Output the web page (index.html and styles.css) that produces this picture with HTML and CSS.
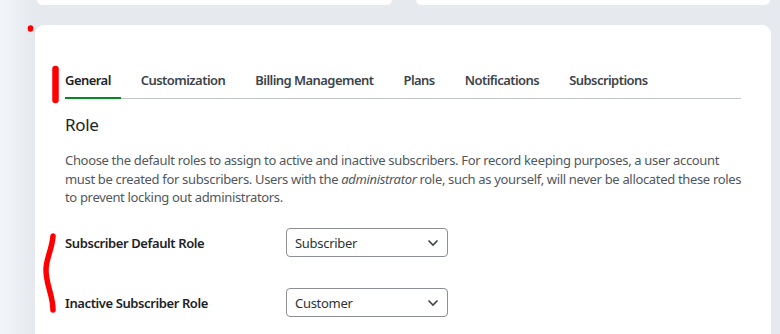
FILE: index.html
```html
<!DOCTYPE html>
<html lang="en">
<head>
    <meta charset="UTF-8">
    <meta name="viewport" content="width=device-width, initial-scale=1.0">
    <title>Settings - General</title>
    <link rel="stylesheet" href="styles.css">
</head>
<body>
    <div class="page">
        <div class="top-cards">
            <div class="top-card"></div>
            <div class="top-card"></div>
        </div>

        <div class="card">
            <div class="tabs">
                <div class="tab active">General</div>
                <div class="tab">Customization</div>
                <div class="tab">Billing Management</div>
                <div class="tab">Plans</div>
                <div class="tab">Notifications</div>
                <div class="tab">Subscriptions</div>
            </div>

            <h2 class="section-title">Role</h2>
            <p class="section-desc">Choose the default roles to assign to active and inactive subscribers. For record keeping purposes, a user account must be created for subscribers. Users with the <em>administrator</em> role, such as yourself, will never be allocated these roles to prevent locking out administrators.</p>

            <div class="field-row">
                <label class="field-label">Subscriber Default Role</label>
                <div class="select">
                    <span>Subscriber</span>
                    <svg class="chevron" width="12" height="8" viewBox="0 0 12 8"><path d="M1.5 1.5 6 6l4.5-4.5" fill="none" stroke="#3c434a" stroke-width="1.6"/></svg>
                </div>
            </div>

            <div class="field-row">
                <label class="field-label">Inactive Subscriber Role</label>
                <div class="select">
                    <span>Customer</span>
                    <svg class="chevron" width="12" height="8" viewBox="0 0 12 8"><path d="M1.5 1.5 6 6l4.5-4.5" fill="none" stroke="#3c434a" stroke-width="1.6"/></svg>
                </div>
            </div>
        </div>
    </div>

    <!-- hand-drawn markup on top of the screenshot -->
    <svg class="marks" width="780" height="334" viewBox="0 0 780 334">
        <ellipse cx="30.5" cy="28.5" rx="2.8" ry="3.3" fill="#ff0000"/>
        <path d="M55.5 69 L55.5 100" stroke="#ff0000" stroke-width="6.5" stroke-linecap="round" fill="none"/>
        <path d="M53 236 C52 250 46 258 46 270 C46 285 53 295 53 310" stroke="#ff0000" stroke-width="5.5" stroke-linecap="round" fill="none"/>
    </svg>
</body>
</html>
```

FILE: styles.css
```css
body {
    margin: 0;
    font-family: "Segoe UI", "Noto Sans", "Open Sans", sans-serif;
    font-size: 13px;
    letter-spacing: -0.3px;
    color: #3c434a;
    background: linear-gradient(to right, #f2f6fa 0, #e6eaef 32px);
    height: 334px;
    overflow: hidden;
}

.page {
    padding: 0 9px 0 35px;
}

.top-cards {
    display: flex;
    gap: 24px;
    padding: 0 1px 0 2px;
}

.top-card {
    flex: 1;
    height: 5px;
    background: #ffffff;
    border-radius: 0 0 9px 9px;
}

.card {
    margin-top: 20px;
    background: #ffffff;
    border-radius: 9px 9px 0 0;
    padding: 46px 30px 40px 30px;
}

.tabs {
    display: flex;
    gap: 20px;
    border-bottom: 1px solid #c3c4c7;
}

.tab {
    font-weight: 600;
    letter-spacing: -0.55px;
    color: #3c434a;
    padding: 0 10px 8px 0;
    line-height: 18px;
    margin-bottom: -1px;
    border-bottom: 2px solid transparent;
}

.tab.active {
    color: #1d2327;
    border-bottom-color: #008a20;
}

.section-title {
    font-size: 17px;
    font-weight: 400;
    color: #1d2327;
    margin: 14px 0 14px;
    line-height: 24px;
}

.section-desc {
    margin: 0 -4px 6px 0;
    line-height: 18.5px;
    letter-spacing: -0.33px;
    color: #50575e;
}

.field-row {
    display: flex;
    align-items: center;
    height: 60px;
}

.field-label {
    width: 221px;
    font-weight: 600;
    letter-spacing: -0.4px;
    color: #1d2327;
}

.select {
    width: 144px;
    height: 27px;
    border: 1px solid #8c8f94;
    border-radius: 4px;
    display: flex;
    align-items: center;
    justify-content: space-between;
    padding: 0 8px;
    color: #2c3338;
}

.chevron {
    display: block;
}

.marks {
    position: absolute;
    left: 0;
    top: 0;
    pointer-events: none;
}
```
